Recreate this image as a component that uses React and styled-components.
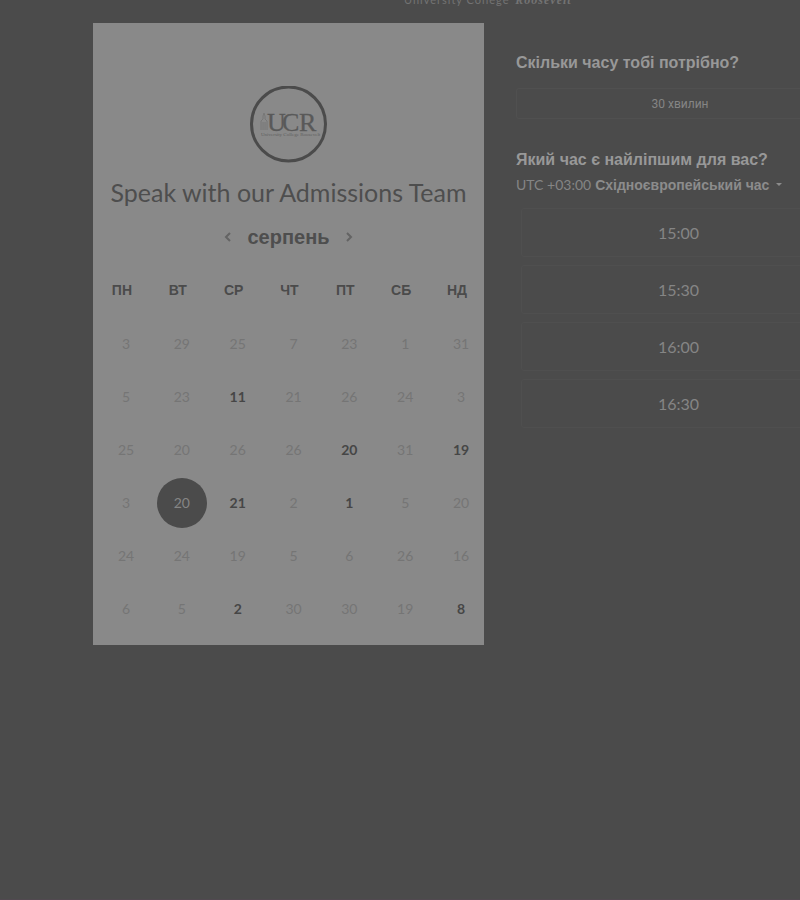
import React, { useState } from "react";
import styled, { createGlobalStyle, css } from "styled-components";

const BG = "#4b4b4b";
const PANEL = "#898989";
const latin = `Lato, "Liberation Sans", sans-serif`;
const cyr = `"Liberation Sans", Arial, sans-serif`;

const Global = createGlobalStyle`
  * { box-sizing: border-box; }
  body { margin: 0; background: ${BG}; font-family: ${cyr}; }
  button { font: inherit; color: inherit; background: none; border: 0; padding: 0; cursor: pointer; }
`;

const Page = styled.div`
  min-height: 100vh;
  overflow: hidden;
  display: flex;
  flex-direction: column;
  border-bottom: 1px solid #514950;
`;

const Brand = styled.header`
  height: 23px;
  padding: 0 0 17px 404px;
  display: flex;
  align-items: flex-end;
`;

const BrandName = styled.div`
  height: 6px;
  display: flex;
  align-items: flex-end;
  overflow: hidden;
  white-space: nowrap;
  font: 11px/12px ${latin};
  letter-spacing: 1px;
  color: #737373;
  em { font: italic bold 12px/12px "Liberation Serif", serif; margin-left: 2px; }
`;

const Booking = styled.main`
  display: flex;
  align-items: stretch;
  padding-left: 93px;
`;

const Calendar = styled.section`
  flex: 0 0 391px;
  padding: 63px 0 10px;
  background: ${PANEL};
  display: flex;
  flex-direction: column;
  align-items: center;
`;

const Logo = styled.svg`
  width: 77px;
  height: 77px;
`;

const Title = styled.h1`
  margin: 13px 0 0;
  font: 25px/32px ${latin};
  color: #4e4e4e;
  white-space: nowrap;
`;

const MonthBar = styled.div`
  margin-top: 13px;
  height: 32px;
  display: flex;
  align-items: center;
  gap: 12px;
  color: #4e4e4e;
`;

const MonthName = styled.h2`
  margin: 0;
  font: bold 20px/32px ${cyr};
`;

const Arrow = styled.button`
  width: 14px;
  height: 24px;
  display: grid;
  place-items: center;
  color: #646464;
`;

const Days = styled.table`
  width: 100%;
  margin-top: 24px;
  table-layout: fixed;
  border-collapse: collapse;
`;

const Weekday = styled.th`
  height: 40px;
  padding: 0 0 15px 2px;
  font: bold 14px/20px ${cyr};
  color: #4b4b4b;
`;

const DayCell = styled.td`
  height: 53px;
  padding: 0 0 0 8px;
`;

const Day = styled.button`
  display: block;
  width: 50px;
  height: 50px;
  border-radius: 50%;
  font: 14px/50px ${latin};
  color: #757575;
  ${(p) => p.$open && css`font-weight: bold; color: #464646;`}
  ${(p) => p.$selected && css`font-weight: normal; background: ${BG}; color: #858585;`}
`;

const Options = styled.section`
  flex: 1 0 360px;
  padding: 30px 0 0 32px;
  color: #989898;
`;

const Question = styled.h3`
  margin: 0;
  font: bold 16px/20px ${cyr};
`;

const Duration = styled.button`
  display: block;
  width: 100%;
  height: 31px;
  margin: 15px 0 31px;
  border: 1px solid #505050;
  border-radius: 3px;
  font: 12px/20px Roboto, sans-serif;
  color: #858585;
`;

const Zone = styled.button`
  display: flex;
  align-items: center;
  gap: 4px;
  height: 30px;
  white-space: nowrap;
  font: bold 14px/20px ${cyr};
  color: #8c8c8c;
`;

const Offset = styled.span`
  font: 14px/20px ${latin};
  color: #858585;
`;

const Slots = styled.div`
  display: flex;
  flex-direction: column;
  gap: 8px;
  padding: 8px 8px 0 5px;
`;

const Slot = styled.button`
  height: 49px;
  border: 1px solid #4f4f4f;
  border-radius: 3px;
  font: 16px/24px ${latin};
  color: #858585;
`;

const weekdays = ["ПН", "ВТ", "СР", "ЧТ", "ПТ", "СБ", "НД"];
const weeks = [
  [3, 29, 25, 7, 23, 1, 31],
  [5, 23, 11, 21, 26, 24, 3],
  [25, 20, 26, 26, 20, 31, 19],
  [3, 20, 21, 2, 1, 5, 20],
  [24, 24, 19, 5, 6, 26, 16],
  [6, 5, 2, 30, 30, 19, 8],
];
const openDays = ["1-2", "2-4", "2-6", "3-1", "3-2", "3-4", "5-2", "5-6"];
const times = ["15:00", "15:30", "16:00", "16:30"];

function Chevron({ d }) {
  return (
    <svg width="8" height="12" viewBox="0 0 8 12" fill="none" stroke="currentColor" strokeWidth="2">
      <path d={d} />
    </svg>
  );
}

function UcrLogo() {
  return (
    <Logo viewBox="0 0 77 77" role="img" aria-label="UCR">
      <circle cx="38.5" cy="38" r="37" fill="none" stroke="#4b4b4b" strokeWidth="3" />
      <path d="M11 44V35l2-2v-3l1-3 1 3v3l2 2v9M13 44v-8M15 44v-8" fill="none" stroke="#777777" />
      <g fill="#595959" stroke="#595959" strokeWidth="0.3" fontFamily="Liberation Serif, serif" fontSize="26">
        <text x="17" y="45">U</text>
        <text x="32" y="45">C</text>
        <text x="49" y="45">R</text>
      </g>
      <text x="11" y="50" fill="#606060" fontFamily="Liberation Serif, serif" fontSize="5">
        University College Roosevelt
      </text>
    </Logo>
  );
}

export default function App() {
  const [selected, setSelected] = useState("3-1");
  return (
    <Page>
      <Global />
      <Brand>
        <BrandName>
          <span>University College <em>Roosevelt</em></span>
        </BrandName>
      </Brand>
      <Booking>
        <Calendar>
          <UcrLogo />
          <Title>Speak with our Admissions Team</Title>
          <MonthBar>
            <Arrow aria-label="Попередній місяць"><Chevron d="M6 2 2 6l4 4" /></Arrow>
            <MonthName>серпень</MonthName>
            <Arrow aria-label="Наступний місяць"><Chevron d="m2 2 4 4-4 4" /></Arrow>
          </MonthBar>
          <Days>
            <thead>
              <tr>{weekdays.map((d) => <Weekday key={d} scope="col">{d}</Weekday>)}</tr>
            </thead>
            <tbody>
              {weeks.map((week, r) => (
                <tr key={r}>
                  {week.map((n, c) => {
                    const id = `${r}-${c}`;
                    const open = openDays.includes(id);
                    return (
                      <DayCell key={id}>
                        <Day
                          $open={open}
                          $selected={selected === id}
                          aria-pressed={selected === id}
                          onClick={() => open && setSelected(id)}
                        >
                          {n}
                        </Day>
                      </DayCell>
                    );
                  })}
                </tr>
              ))}
            </tbody>
          </Days>
        </Calendar>
        <Options>
          <Question>Скільки часу тобі потрібно?</Question>
          <Duration>30 хвилин</Duration>
          <Question>Який час є найліпшим для вас?</Question>
          <Zone>
            <Offset>UTC +03:00</Offset>
            <span>Східноєвропейський час</span>
            <svg width="12" height="6" viewBox="0 0 12 6"><path d="M3 1h6L6 4z" fill="currentColor" /></svg>
          </Zone>
          <Slots>
            {times.map((t) => <Slot key={t}>{t}</Slot>)}
          </Slots>
        </Options>
      </Booking>
    </Page>
  );
}
